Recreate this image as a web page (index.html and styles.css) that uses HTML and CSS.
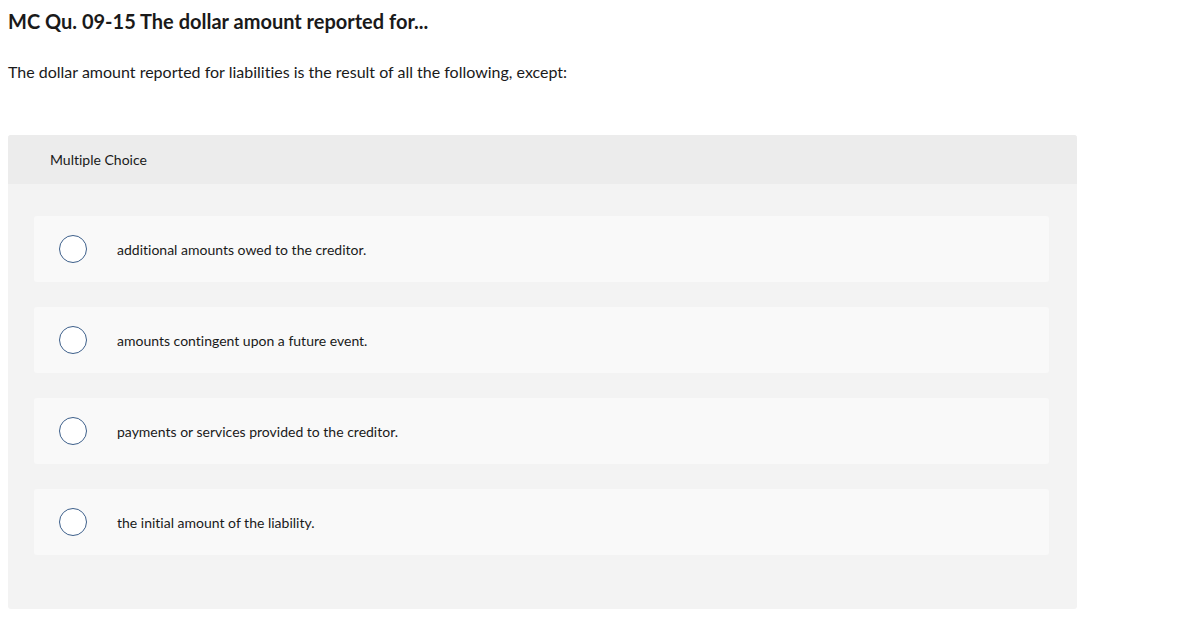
FILE: index.html
```html
<!DOCTYPE html>
<html>
<head>
<meta charset="utf-8">
<link rel="stylesheet" href="styles.css">
</head>
<body>
<h1 class="title">MC Qu. 09-15 The dollar amount reported for...</h1>
<p class="prompt">The dollar amount reported for liabilities is the result of all the following, except:</p>
<section class="panel">
  <div class="panel-head">Multiple Choice</div>
  <div class="panel-body">
    <label class="option"><span class="radio"></span><span class="opt-text">additional amounts owed to the creditor.</span></label>
    <label class="option"><span class="radio"></span><span class="opt-text">amounts contingent upon a future event.</span></label>
    <label class="option"><span class="radio"></span><span class="opt-text">payments or services provided to the creditor.</span></label>
    <label class="option"><span class="radio"></span><span class="opt-text">the initial amount of the liability.</span></label>
  </div>
</section>
</body>
</html>
```
FILE: styles.css
```css
* { box-sizing: border-box; }
body {
  margin: 0;
  padding: 0 121px 0 8px;
  font-family: Lato, "Liberation Sans", sans-serif;
  font-variant-ligatures: none;
  color: #1a1a1a;
  background: #fff;
}
.title {
  margin: 0;
  padding-top: 9px;
  font-size: 20px;
  font-weight: 700;
  line-height: 24px;
}
.prompt {
  margin: 0;
  padding-top: 29px;
  font-size: 16px;
  line-height: 20px;
}
.panel {
  margin-top: 53px;
  border-radius: 3px;
  background: #f3f3f3;
  overflow: hidden;
}
.panel-head {
  height: 49px;
  background: #ececec;
  padding-left: 42px;
  display: flex;
  align-items: center;
  font-size: 14px;
}
.panel-body {
  padding: 32px 28px 54px 26px;
  display: flex;
  flex-direction: column;
  gap: 25px;
}
.option {
  height: 66px;
  background: #f9f9f9;
  border-radius: 3px;
  display: flex;
  align-items: center;
  padding-left: 25px;
  font-size: 14px;
}
.radio {
  width: 28px;
  height: 28px;
  border: 1.5px solid #3d5f8a;
  border-radius: 50%;
  background: #fff;
  flex: none;
}
.opt-text {
  margin-left: 30px;
}
```
